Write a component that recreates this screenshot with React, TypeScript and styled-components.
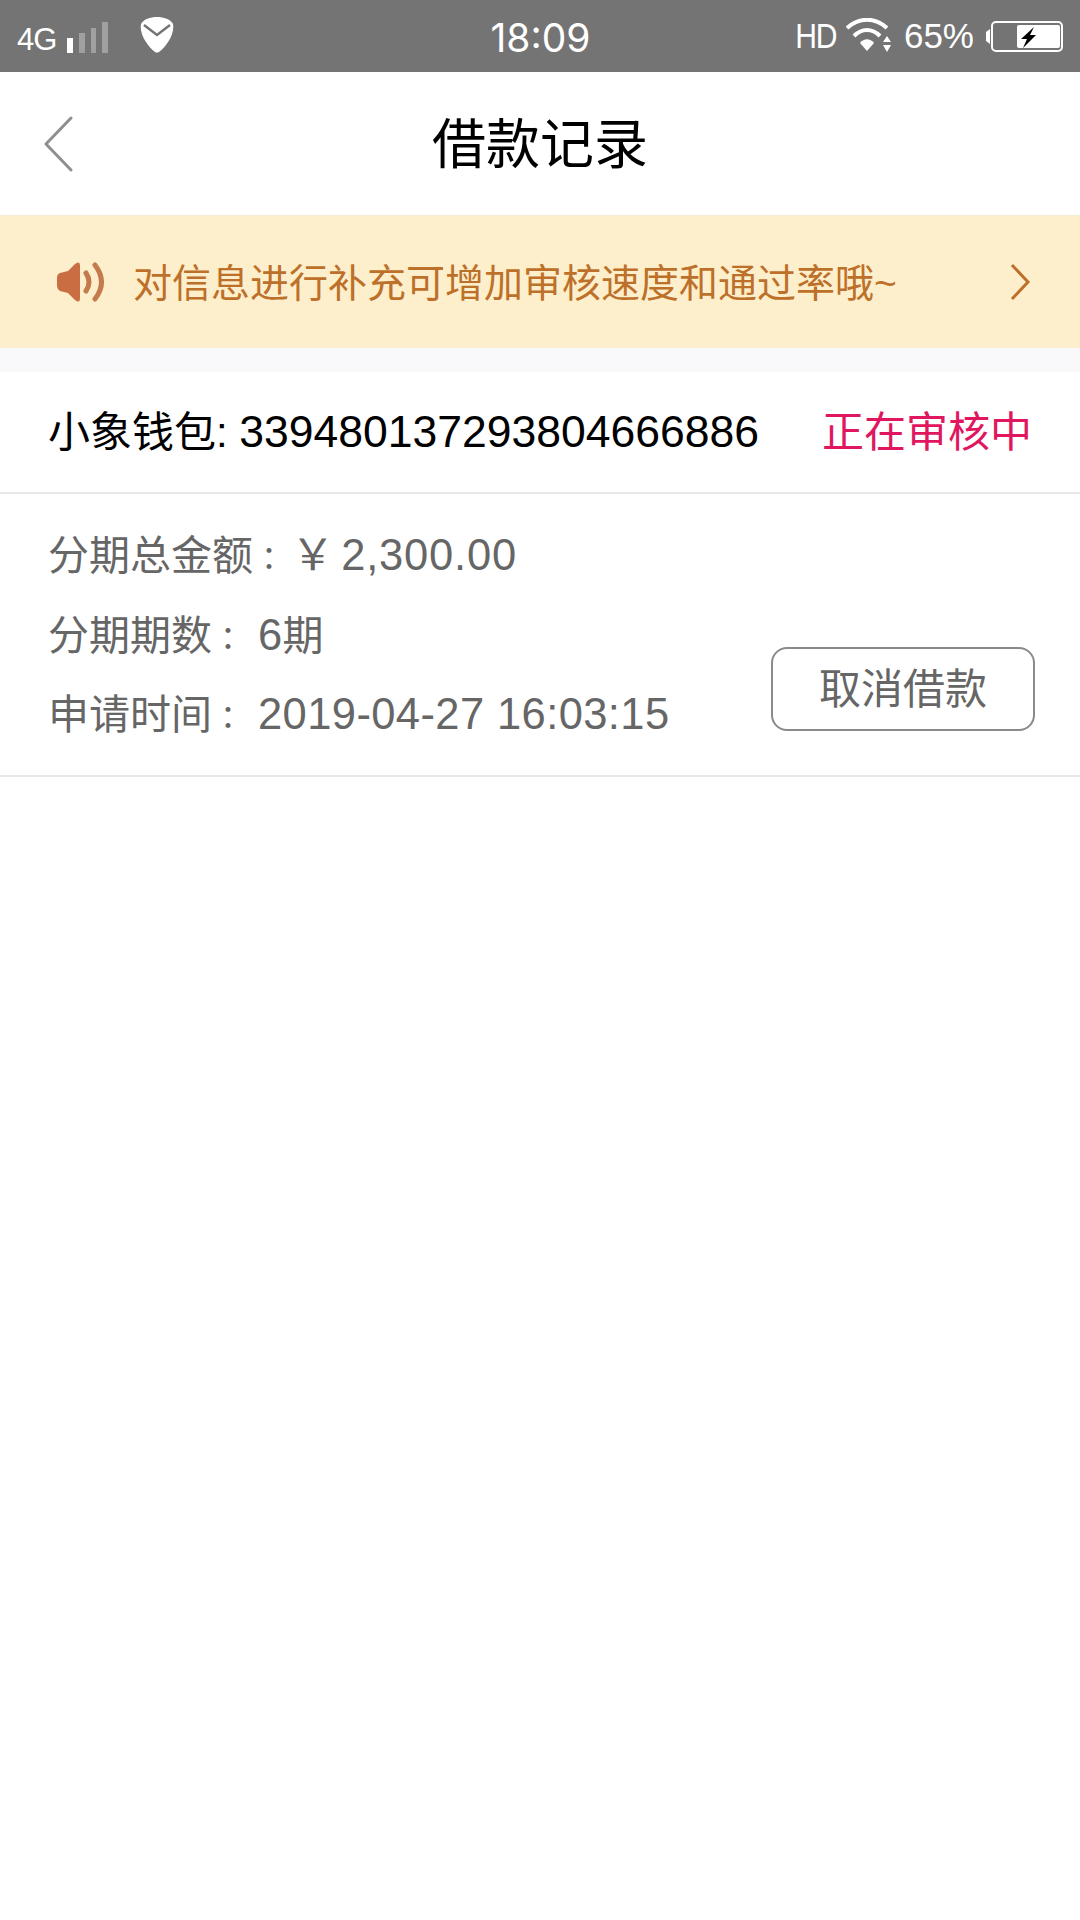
import React from 'react';
import styled, { createGlobalStyle } from 'styled-components';

const GlobalStyle = createGlobalStyle`
  html, body {
    margin: 0;
    padding: 0;
    background: #fff;
    font-family: "Liberation Sans", "Noto Sans CJK SC", sans-serif;
  }
  * { box-sizing: border-box; }
`;

const Page = styled.div`
  width: 1080px;
  min-height: 1920px;
  background: #fff;
  display: flex;
  flex-direction: column;
`;

const StatusBar = styled.div`
  height: 72px;
  background: #747474;
  color: #fff;
  display: grid;
  grid-template-columns: 1fr auto 1fr;
  align-items: center;
  padding: 0 16px 0 17px;
`;

const StatusLeft = styled.div`
  display: flex;
  align-items: center;
`;

const StatusRight = styled.div`
  display: flex;
  align-items: center;
  justify-content: flex-end;
`;

const NetworkLabel = styled.span`
  font-size: 31px;
  letter-spacing: -1px;
  margin-top: 7px;
`;

const Clock = styled.span`
  font-family: Inter, "Liberation Sans", sans-serif;
  font-size: 39px;
  margin-top: 2px;
`;

const HdLabel = styled.span`
  display: inline-block;
  font-size: 35px;
  letter-spacing: -1.5px;
  transform: scaleX(0.86);
  margin-right: 6px;
`;

const Percent = styled.span`
  font-size: 35px;
  margin: 0 12px 0 10px;
`;

const NavBar = styled.header`
  height: 144px;
  padding-bottom: 7px;
  display: flex;
  align-items: center;
  justify-content: center;
  position: relative;
  border-bottom: 1px solid #f3ead8;
`;

const BackButton = styled.div`
  position: absolute;
  left: 43px;
  top: 44px;
  display: flex;
`;

const Title = styled.h1`
  margin: 0;
  font-size: 54px;
  font-weight: 400;
  color: #000;
`;

const Notice = styled.div`
  height: 132px;
  background: #fdefcb;
  display: flex;
  align-items: center;
  padding: 0 49px 0 57px;
`;

const NoticeText = styled.span`
  flex: 1;
  margin: 0 0 5px 26px;
  font-size: 39px;
  color: #bd7029;
  white-space: nowrap;
`;

const Gap = styled.div`
  height: 24px;
  background: #f9f9fb;
`;

const RecordHead = styled.div`
  height: 122px;
  display: flex;
  align-items: center;
  justify-content: space-between;
  padding: 0 48px 7px 48px;
  border-bottom: 2px solid #e8e8e8;
`;

const RecordId = styled.span`
  font-size: 42px;
  color: #000;
  white-space: nowrap;
`;

const IdNumber = styled.span`
  font-size: 44.5px;
`;

const RecordState = styled.span`
  font-size: 42px;
  color: #e0175f;
`;

const RecordBody = styled.div`
  height: 283px;
  display: flex;
  justify-content: space-between;
  align-items: flex-end;
  padding: 22px 45px 44px 48px;
  border-bottom: 2px solid #e8e8e8;
`;

const Details = styled.div`
  align-self: flex-start;
  display: flex;
  flex-direction: column;
`;

const DetailLine = styled.div`
  height: 79.5px;
  line-height: 79.5px;
  font-size: 41px;
  color: #666;
  white-space: pre;
`;

const Colon = styled.span`
  font-family: "Noto Sans CJK TC", sans-serif;
  font-size: 32px;
`;

const DetailValue = styled.span`
  font-size: 43.5px;
  letter-spacing: 0.4px;
  margin-left: 14px;
`;

const AmountValue = styled(DetailValue)`
  letter-spacing: 0.8px;
  margin-left: 6px;
  word-spacing: -7px;
`;

const CancelButton = styled.button`
  width: 264px;
  height: 84px;
  background: #fff;
  border: 2px solid #8a8a8a;
  border-radius: 16px;
  font-family: inherit;
  font-size: 42px;
  color: #666;
  padding: 0 0 8px;
`;

const Shield = () => (
  <svg width="34" height="36" viewBox="0 0 34 36" style={{ marginLeft: 30, marginTop: -2 }}>
    <path d="M17 0 C24 0 30 2 33 7 C35 17 26 30 19 35 Q17 36 15 35 C8 30 -1 17 1 7 C4 2 10 0 17 0 Z" fill="#fff" />
    <path d="M4 8 L17 18 L30 8" fill="none" stroke="#747474" strokeWidth="2.500" />
  </svg>
);

const Signal = () => (
  <svg width="44" height="32" viewBox="0 0 44 32" style={{ marginLeft: 10, marginTop: 3 }}>
    <rect x="1" y="16" width="6" height="15" fill="#fff" />
    <rect x="13" y="11" width="6" height="20" fill="#a0a0a0" />
    <rect x="25" y="6" width="5" height="25" fill="#a0a0a0" />
    <rect x="36" y="0" width="6" height="31" fill="#a0a0a0" />
  </svg>
);

const Wifi = () => (
  <svg width="48" height="36" viewBox="0 0 48 36">
    <path d="M1 10 C13 -1 29 -1 41 10" fill="none" stroke="#fff" strokeWidth="4" />
    <path d="M8 18 C16 10 26 10 34 18" fill="none" stroke="#fff" strokeWidth="4" />
    <path d="M14 25 C18 20 24 20 28 25 L21 33 Z" fill="#fff" />
    <path d="M37 24 L41 18 L45 24 Z M37 27 L45 27 L41 34 Z" fill="#fff" />
  </svg>
);

const Battery = () => (
  <svg width="78" height="34" viewBox="0 0 78 34">
    <path d="M4 10 L0 13 L0 22 L4 25 Z" fill="#fff" />
    <rect x="6" y="3" width="70" height="29" rx="4" fill="none" stroke="#fff" strokeWidth="2" />
    <rect x="31" y="6" width="43" height="23" rx="2" fill="#fff" />
    <path d="M48 8 L35 20 L41 20 L37 29 L50 16 L44 16 L48 8 Z" fill="#000" />
  </svg>
);

const Back = () => (
  <svg width="32" height="60" viewBox="0 0 32 60">
    <path d="M28 2 L3 28 L28 54" fill="none" stroke="#8f8f8f" strokeWidth="3" strokeLinecap="round" strokeLinejoin="round" />
  </svg>
);

const Speaker = () => (
  <svg width="50" height="42" viewBox="0 0 50 42">
    <path d="M3 12 L11 10 L18 3 Q23 -1 23 5 V37 Q23 43 18 39 L11 32 L3 30 Q0 28 0 25 V17 Q0 13 3 12 Z" fill="#c96e42" />
    <path d="M29 12 Q35 21 29 30" fill="none" stroke="#c47a4c" strokeWidth="5" strokeLinecap="round" />
    <path d="M38 4 Q51 21 38 38" fill="none" stroke="#c47a4c" strokeWidth="5" strokeLinecap="round" />
  </svg>
);

const Chevron = () => (
  <svg width="22" height="38" viewBox="0 0 22 38">
    <path d="M3 2 L19 19 L3 36" fill="none" stroke="#bd7029" strokeWidth="3" />
  </svg>
);

export default function App() {
  return (
    <>
      <GlobalStyle />
      <Page>
        <StatusBar>
          <StatusLeft>
            <NetworkLabel>4G</NetworkLabel>
            <Signal />
            <Shield />
          </StatusLeft>
          <Clock>18:09</Clock>
          <StatusRight>
            <HdLabel>HD</HdLabel>
            <Wifi />
            <Percent>65%</Percent>
            <Battery />
          </StatusRight>
        </StatusBar>
        <NavBar>
          <BackButton>
            <Back />
          </BackButton>
          <Title>借款记录</Title>
        </NavBar>
        <Notice>
          <Speaker />
          <NoticeText>对信息进行补充可增加审核速度和通过率哦~</NoticeText>
          <Chevron />
        </Notice>
        <Gap />
        <RecordHead>
          <RecordId>
            小象钱包: <IdNumber>339480137293804666886</IdNumber>
          </RecordId>
          <RecordState>正在审核中</RecordState>
        </RecordHead>
        <RecordBody>
          <Details>
            <DetailLine>
              分期总金额<Colon>：</Colon>
              <AmountValue>￥ 2,300.00</AmountValue>
            </DetailLine>
            <DetailLine>
              分期期数<Colon>：</Colon>
              <DetailValue>6</DetailValue>期
            </DetailLine>
            <DetailLine>
              申请时间<Colon>：</Colon>
              <DetailValue>2019-04-27 16:03:15</DetailValue>
            </DetailLine>
          </Details>
          <CancelButton>取消借款</CancelButton>
        </RecordBody>
      </Page>
    </>
  );
}
